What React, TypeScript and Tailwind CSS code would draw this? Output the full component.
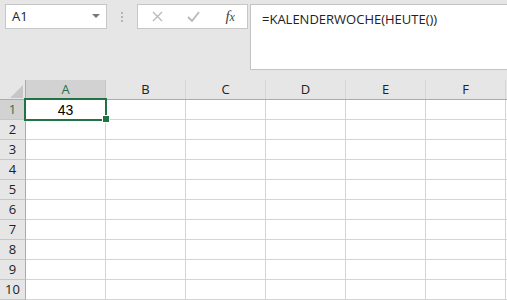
const COLS = ["A", "B", "C", "D", "E", "F"];
const ROWS = [1, 2, 3, 4, 5, 6, 7, 8, 9, 10];

const ui = { fontFamily: '"Open Sans", "Noto Sans", sans-serif' };

const App = () => {
  return (
    <div className="w-[507px] h-[300px] overflow-hidden bg-[#e6e6e6] select-none">
      {/* formula bar */}
      <div className="flex items-start h-[80px] pt-[4px] pl-[5px]">
        <div
          className="flex items-center justify-between w-[102px] h-[25px] bg-white border border-[#c6c6c6] pl-[6px] pr-[5px] text-[13px] text-[#222]"
          style={ui}
        >
          <span>A1</span>
          <svg width="9" height="5" viewBox="0 0 9 5">
            <path d="M0 0 H8 L4 4 Z" fill="#777" />
          </svg>
        </div>
        <div className="w-[30px] h-[25px] flex flex-col items-center justify-center gap-[2px]">
          <span className="w-[2px] h-[2px] bg-[#b4b4b4]" />
          <span className="w-[2px] h-[2px] bg-[#b4b4b4]" />
          <span className="w-[2px] h-[2px] bg-[#b4b4b4]" />
        </div>
        <div className="flex items-center w-[111px] h-[25px] bg-white border border-[#c6c6c6]">
          <div className="w-[38px] flex justify-center pl-[1px]">
            <svg width="11" height="11" viewBox="0 0 11 11">
              <path d="M1 1 L10 10 M10 1 L1 10" stroke="#b8b8b8" strokeWidth="1.3" />
            </svg>
          </div>
          <div className="w-[36px] flex justify-center">
            <svg width="13" height="11" viewBox="0 0 13 11">
              <path d="M1 6 L5 10 L12 1" stroke="#b8b8b8" strokeWidth="1.8" fill="none" />
            </svg>
          </div>
          <div
            className="w-[36px] flex justify-center items-baseline text-[15px] italic text-[#444] leading-none pl-[2px]"
            style={{ fontFamily: '"Liberation Serif", serif' }}
          >
            f<span className="text-[12px]">x</span>
          </div>
        </div>
        <div
          className="ml-[2px] flex-1 h-[66px] bg-white border border-r-0 border-[#c3c3c3] pl-[11px] pt-[6px] text-[13px] text-[#222] leading-[16px]"
          style={ui}
        >
          =KALENDERWOCHE(HEUTE())
        </div>
      </div>

      {/* grid */}
      <div className="relative">
        <div className="flex h-[20px] border-b border-[#ababab]">
          <div className="w-[26px] h-[19px] border-r border-[#ababab] relative">
            <svg className="absolute left-[10px] top-[5px]" width="13" height="13" viewBox="0 0 13 13">
              <path d="M13 0 V13 H0 Z" fill="#c6c6c6" />
            </svg>
          </div>
          {COLS.map((c) => (
            <div
              key={c}
              className={
                c === "A"
                  ? "w-[80px] h-[19px] shrink-0 flex items-center justify-center border-r border-[#c6c6c6] bg-[#d2d2d2] text-[13px] text-[#217346]"
                  : "w-[80px] h-[19px] shrink-0 flex items-center justify-center border-r border-[#d4d4d4] text-[13px] text-[#222]"
              }
              style={ui}
            >
              {c}
            </div>
          ))}
          <div className="flex-1" />
        </div>
        {ROWS.map((r) => (
          <div key={r} className="flex h-[20px]">
            <div
              className={
                r === 1
                  ? "w-[26px] h-[20px] shrink-0 flex items-center justify-center border-r border-b border-[#ababab] border-b-[#c6c6c6] bg-[#d2d2d2] text-[13px] text-[#217346]"
                  : "w-[26px] h-[20px] shrink-0 flex items-center justify-center border-r border-b border-[#ababab] border-b-[#c6c6c6] text-[13px] text-[#222]"
              }
              style={ui}
            >
              {r}
            </div>
            {COLS.map((c) => (
              <div
                key={c}
                className="w-[80px] h-[20px] shrink-0 bg-white border-r border-b border-[#d4d4d4] flex items-center justify-center pt-[1px] text-[14px] text-black"
                style={{ fontFamily: '"Liberation Sans", Arial, sans-serif' }}
              >
                {r === 1 && c === "A" ? "43" : ""}
              </div>
            ))}
            <div className="flex-1 h-[20px] bg-white border-b border-[#d4d4d4]" />
          </div>
        ))}
        {/* selection */}
        <div className="absolute left-[24px] top-[18px] w-[83px] h-[23px] border-2 border-[#217346] pointer-events-none" />
        <div className="absolute left-[103px] top-[36px] w-[6px] h-[6px] bg-[#217346] border border-white box-content -m-px" />
      </div>
    </div>
  );
};

export default App;
